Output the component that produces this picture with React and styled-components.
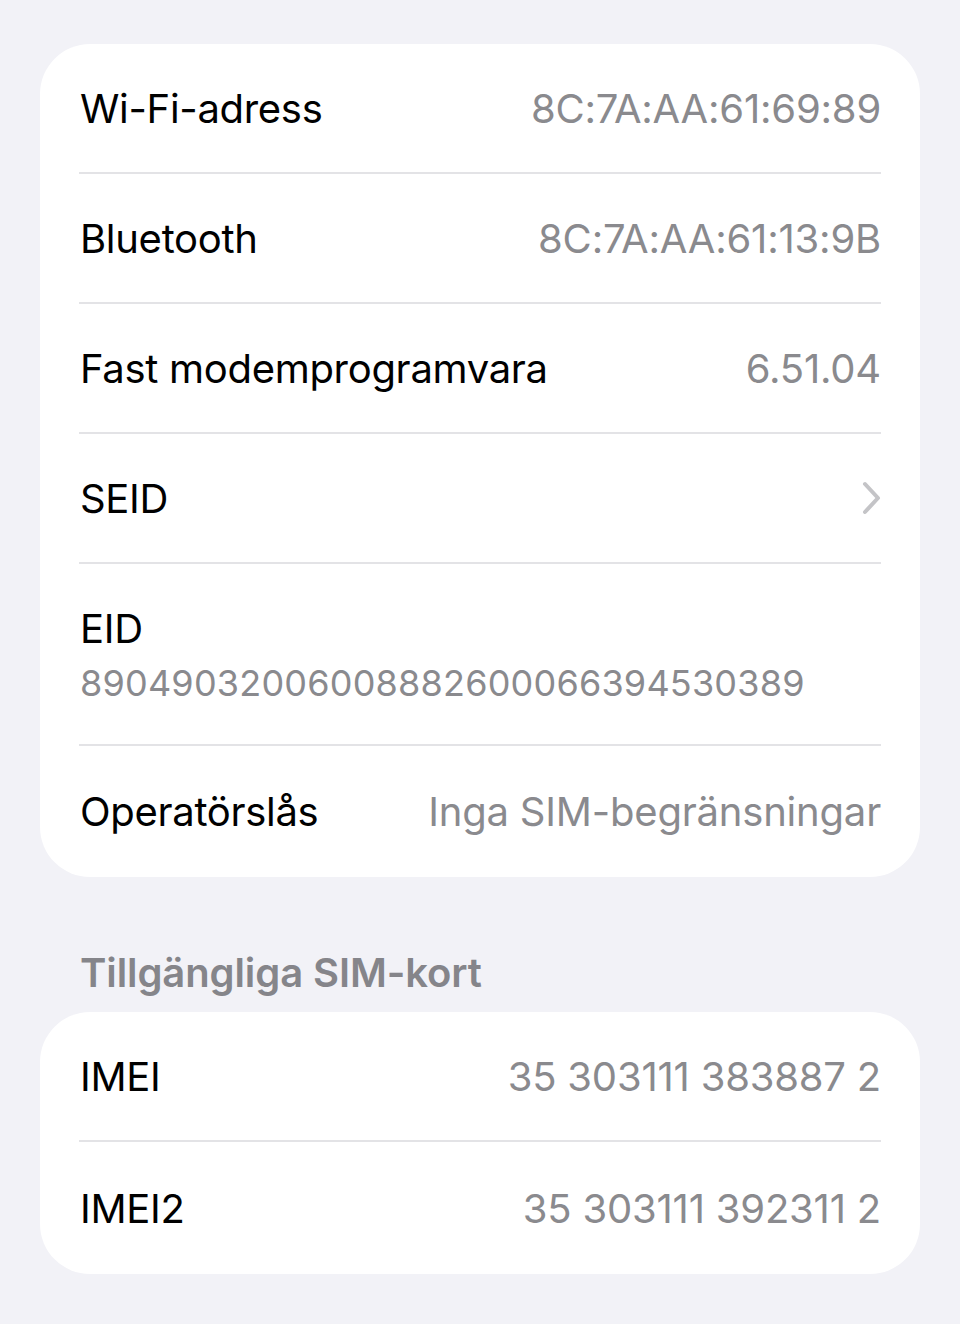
import React from "react";
import styled, { createGlobalStyle } from "styled-components";

const Global = createGlobalStyle`
  html, body { margin: 0; padding: 0; background: #f2f2f7; }
  body { font-family: Inter, "Noto Sans", "Liberation Sans", sans-serif; -webkit-font-smoothing: antialiased; }
`;

const Page = styled.div`
  padding: 44px 40px 49px;
  display: flex;
  flex-direction: column;
`;

const Card = styled.div`
  background: #ffffff;
  border-radius: 50px;
  padding: 0 39px;
  display: flex;
  flex-direction: column;
`;

const Row = styled.div`
  box-sizing: border-box;
  height: ${(p) => p.$h || 130}px;
  display: flex;
  flex-direction: ${(p) => (p.$stack ? "column" : "row")};
  align-items: ${(p) => (p.$stack ? "flex-start" : "center")};
  justify-content: ${(p) => (p.$stack ? "center" : "space-between")};
  border-bottom: 2px solid #e3e3e6;
  &:last-child { border-bottom: none; }
`;

const Label = styled.span`
  font-size: 40px;
  color: #000;
  letter-spacing: -0.3px;
  padding-left: 1px;
`;

const Value = styled.span`
  font-size: 40px;
  color: #8a8a8e;
  letter-spacing: -0.2px;
`;

const Sub = styled.span`
  font-size: 36px;
  color: #8a8a8e;
  margin-top: 8px;
  padding-left: 1px;
  letter-spacing: 0.2px;
`;

const Header = styled.div`
  font-size: 40px;
  font-weight: 600;
  color: #85858a;
  padding: 71px 0 15px 40px;
  letter-spacing: -0.1px;
`;

const Chevron = () => (
  <svg width="20" height="34" viewBox="0 0 20 34" style={{ marginRight: 0 }}>
    <path d="M4 3 L17 17 L4 31" fill="none" stroke="#c4c4c7" strokeWidth="4" strokeLinecap="round" strokeLinejoin="round" />
  </svg>
);

export default function App() {
  return (
    <>
      <Global />
      <Page>
        <Card>
          <Row $h={130}>
            <Label>Wi-Fi-adress</Label>
            <Value>8C:7A:AA:61:69:89</Value>
          </Row>
          <Row>
            <Label>Bluetooth</Label>
            <Value>8C:7A:AA:61:13:9B</Value>
          </Row>
          <Row>
            <Label>Fast modemprogramvara</Label>
            <Value>6.51.04</Value>
          </Row>
          <Row>
            <Label>SEID</Label>
            <Chevron />
          </Row>
          <Row $h={182} $stack>
            <Label>EID</Label>
            <Sub>89049032006008882600066394530389</Sub>
          </Row>
          <Row $h={131}>
            <Label>Operatörslås</Label>
            <Value>Inga SIM-begränsningar</Value>
          </Row>
        </Card>
        <Header>Tillgängliga SIM-kort</Header>
        <Card>
          <Row $h={130}>
            <Label>IMEI</Label>
            <Value>35 303111 383887 2</Value>
          </Row>
          <Row $h={132}>
            <Label>IMEI2</Label>
            <Value>35 303111 392311 2</Value>
          </Row>
        </Card>
      </Page>
    </>
  );
}
